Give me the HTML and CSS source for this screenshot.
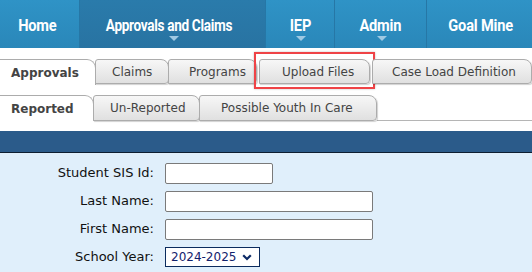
FILE: index.html
```html
<!DOCTYPE html>
<html>
<head>
<meta charset="utf-8">
<link rel="stylesheet" href="styles.css">
</head>
<body>
<nav class="nav">
  <div class="nav-item home"><span class="nav-label">Home</span></div>
  <div class="nav-item approvals active"><span class="nav-label nav-label-tight">Approvals and Claims</span><span class="caret"></span></div>
  <div class="nav-item iep"><span class="nav-label">IEP</span><span class="caret"></span></div>
  <div class="nav-item admin"><span class="nav-label">Admin</span><span class="caret"></span></div>
  <div class="nav-item goal"><span class="nav-label">Goal Mine</span></div>
</nav>

<div class="tabs tabs-main">
  <div class="tab active t-approvals">Approvals</div>
  <div class="tab t-claims">Claims</div>
  <div class="tab t-programs">Programs</div>
  <div class="tab t-upload">Upload Files<span class="highlight"></span></div>
  <div class="tab t-caseload">Case Load Definition</div>
</div>

<div class="tabs tabs-sub">
  <div class="tab active t-reported">Reported</div>
  <div class="tab t-unreported">Un-Reported</div>
  <div class="tab t-possible">Possible Youth In Care</div>
  <div class="tabs-rest"></div>
</div>

<div class="bar"></div>

<form class="form">
  <label class="lbl">Student SIS Id:</label>
  <input class="inp inp-short" type="text">
  <label class="lbl">Last Name:</label>
  <input class="inp inp-long" type="text">
  <label class="lbl">First Name:</label>
  <input class="inp inp-long" type="text">
  <label class="lbl">School Year:</label>
  <div class="select">
    <span class="select-text">2024-2025</span>
    <svg class="chev" width="10" height="7" viewBox="0 0 10 7"><path d="M1.2 1.2 L5 5 L8.8 1.2" fill="none" stroke="#0c2a66" stroke-width="2.2"/></svg>
  </div>
</form>
</body>
</html>
```

FILE: styles.css
```css
* { box-sizing: border-box; }
html, body { margin: 0; padding: 0; }
body {
  width: 532px;
  height: 272px;
  overflow: hidden;
  background: #e0effb;
  font-family: "DejaVu Sans", Verdana, sans-serif;
}

/* top navigation */
.nav {
  display: flex;
  height: 48px;
  background: linear-gradient(#2f93c6, #2a87b9);
}
.nav-item {
  position: relative;
  flex: none;
  display: flex;
  align-items: center;
  justify-content: center;
  padding-top: 1px;
  color: #fff;
  font-family: "Roboto", "Liberation Sans", sans-serif;
  font-weight: bold;
  font-size: 17px;
  border-right: 1px solid #2677a6;
}
.nav-label {
  display: inline-block;
  white-space: nowrap;
  transform: scaleX(0.86);
  letter-spacing: -0.2px;
}
.nav-label-tight {
  transform: scaleX(0.8);
  letter-spacing: -0.4px;
}
.home { width: 80px; padding-right: 5px; }
.approvals { width: 186px; padding-right: 8px; }
.iep { width: 69px; }
.admin { width: 92px; }
.goal { width: 105px; border-right: none; padding-left: 2px; }
.nav-item.active { background: linear-gradient(#2a7bab, #2873a2); }
.caret {
  position: absolute;
  left: 50%;
  bottom: 7px;
  margin-left: -4px;
  width: 0;
  height: 0;
  border-left: 5px solid transparent;
  border-right: 5px solid transparent;
  border-top: 5px solid #9fc9e3;
}

/* tabs */
.tabs {
  display: flex;
  align-items: flex-start;
  background: #fff;
  font-size: 12px;
  color: #444;
}
.tabs-main { padding-top: 11px; height: 47px; }
.tabs-sub { height: 36px; }
.tab {
  position: relative;
  height: 25px;
  display: flex;
  align-items: center;
  padding: 0 16px;
  border: 1px solid #acacac;
  border-radius: 3px 8px 4px 0;
  background: linear-gradient(#f7f7f7, #e0e0e0);
  box-shadow: 1px 1px 1px rgba(0,0,0,0.18);
  margin-left: -1px;
  white-space: nowrap;
}
.tab.active {
  height: 26px;
  background: #fff;
  border-bottom: none;
  border-left: none;
  border-radius: 0 9px 0 0;
  box-shadow: none;
  font-weight: bold;
  margin-left: 0;
}
.t-approvals { width: 98px; padding-left: 11px; }
.t-claims { width: 74px; padding-left: 16px; }
.t-programs { width: 89px; padding-left: 20px; }
.t-upload { margin-left: 2px; width: 111px; padding-left: 22px; }
.t-caseload { margin-left: 2px; width: 160px; padding-left: 19px; }
.t-reported { width: 94px; padding-left: 11px; height: 26px; }
.t-unreported { width: 107px; padding-left: 16px; }
.t-possible { width: 178px; padding-left: 21px; }
.tabs-sub .tab { height: 26px; }
.tabs-sub .tab.active { height: 26px; }
.tabs-rest {
  flex: 1;
  height: 26px;
  border-bottom: 1px solid #b5b5b5;
}

.highlight {
  position: absolute;
  left: -6px;
  top: -8px;
  width: 121px;
  height: 37px;
  border: 2px solid #ef4346;
  box-shadow: 0 0 2px rgba(0,0,0,0.25);
}

/* header bar */
.bar {
  height: 22px;
  background: #2b5b8a;
  border-bottom: 1px solid #0e1e30;
}

/* form */
.form {
  display: grid;
  grid-template-columns: 154px auto;
  grid-auto-rows: 28px;
  column-gap: 11px;
  padding-top: 10px;
  margin: 0;
  font-size: 13px;
  color: #111;
}
.lbl {
  text-align: right;
  padding-top: 2px;
  white-space: nowrap;
}
.inp {
  height: 21px;
  border: 1px solid #7a7a7a;
  border-radius: 2px;
  background: #fff;
  margin: 0;
}
.inp-short { width: 108px; }
.inp-long { width: 208px; }
.select {
  width: 95px;
  height: 20px;
  border: 1px solid #0b2b5e;
  background: #fff;
  display: flex;
  align-items: center;
  padding: 0 4px 0 5px;
  gap: 6px;
  color: #12226c;
  font-size: 12px;
  white-space: nowrap;
}
.chev { flex: none; margin-top: 1px; }
```
